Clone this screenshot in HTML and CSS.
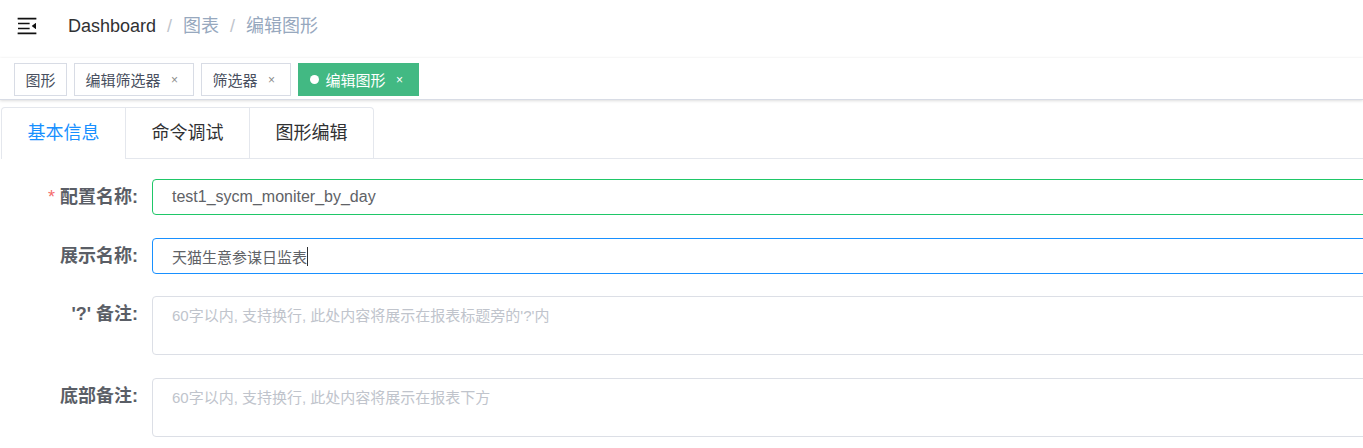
FILE: index.html
```html
<!DOCTYPE html>
<html lang="zh-CN">
<head>
<meta charset="utf-8">
<title>编辑图形</title>
<link rel="stylesheet" href="styles.css">
</head>
<body>
<div class="app">
  <header class="navbar">
    <div class="hamburger">
      <svg class="hamburger-icon" viewBox="0 0 1024 1024" width="24" height="24" aria-hidden="true">
        <path fill="#111" d="M408 442h480c4.4 0 8-3.6 8-8v-56c0-4.4-3.6-8-8-8H408c-4.4 0-8 3.6-8 8v56c0 4.4 3.6 8 8 8zm-8 204c0 4.4 3.6 8 8 8h480c4.4 0 8-3.6 8-8v-56c0-4.4-3.6-8-8-8H408c-4.4 0-8 3.6-8 8v56zm504-486H120c-4.4 0-8 3.6-8 8v56c0 4.4 3.6 8 8 8h784c4.4 0 8-3.6 8-8v-56c0-4.4-3.6-8-8-8zm0 632H120c-4.4 0-8 3.6-8 8v56c0 4.4 3.6 8 8 8h784c4.4 0 8-3.6 8-8v-56c0-4.4-3.6-8-8-8zM142.4 642.1L298.7 519a8.840 8.840 0 0 0 0-13.9L142.4 381.9c-5.8-4.6-14.4-.5-14.4 6.9v246.3a8.900 8.900 0 0 0 14.4 7z"/>
      </svg>
    </div>
    <nav class="breadcrumb">
      <span class="crumb crumb-link">Dashboard</span>
      <span class="crumb-sep">/</span>
      <span class="crumb">图表</span>
      <span class="crumb-sep">/</span>
      <span class="crumb">编辑图形</span>
    </nav>
  </header>

  <div class="tags-view">
    <span class="tag">图形</span>
    <span class="tag">编辑筛选器<span class="tag-close">×</span></span>
    <span class="tag">筛选器<span class="tag-close">×</span></span>
    <span class="tag tag-active"><span class="tag-dot"></span>编辑图形<span class="tag-close">×</span></span>
  </div>

  <main class="main">
    <div class="tabs">
      <div class="tabs-header">
        <div class="tab-list">
          <div class="tab tab-active">基本信息</div>
          <div class="tab">命令调试</div>
          <div class="tab">图形编辑</div>
        </div>
      </div>
      <form class="form">
        <div class="form-item">
          <label class="form-label"><span class="required">*</span>配置名称:</label>
          <div class="form-control">
            <div class="input input-success">test1_sycm_moniter_by_day</div>
          </div>
        </div>
        <div class="form-item">
          <label class="form-label">展示名称:</label>
          <div class="form-control">
            <div class="input input-focus">天猫生意参谋日监表<span class="caret"></span></div>
          </div>
        </div>
        <div class="form-item">
          <label class="form-label">'?' 备注:</label>
          <div class="form-control">
            <textarea class="textarea" placeholder="60字以内, 支持换行, 此处内容将展示在报表标题旁的'?'内"></textarea>
          </div>
        </div>
        <div class="form-item">
          <label class="form-label">底部备注:</label>
          <div class="form-control">
            <textarea class="textarea" placeholder="60字以内, 支持换行, 此处内容将展示在报表下方"></textarea>
          </div>
        </div>
      </form>
    </div>
  </main>
</div>
</body>
</html>
```

FILE: styles.css
```css
html, body {
  margin: 0;
  padding: 0;
  background: #fff;
  overflow: hidden;
}

body {
  font-family: "Liberation Sans", "Noto Sans CJK SC", sans-serif;
  color: #303133;
}

.app {
  width: 100%;
}

/* ---------- navbar ---------- */
.navbar {
  height: 58px;
  box-sizing: border-box;
  padding-bottom: 6px;
  display: flex;
  align-items: center;
  background: #fff;
}

.hamburger {
  padding: 0 15px;
  display: flex;
  align-items: center;
}

.hamburger-icon {
  display: block;
  transform: rotate(180deg);
}

.breadcrumb {
  margin-left: 14px;
  display: flex;
  align-items: center;
  font-size: 18px;
  line-height: 24px;
}

.crumb {
  color: #97a8be;
}

.crumb-link {
  color: #303133;
}

.crumb-sep {
  color: #c0c4cc;
  margin: 0 11px;
}

/* ---------- tags view ---------- */
.tags-view {
  height: 42px;
  box-sizing: border-box;
  padding: 5px 0 0 14px;
  display: flex;
  align-items: flex-start;
  gap: 7px;
  background: #fff;
  border-bottom: 1px solid #d8dce5;
  box-shadow: 0 1px 3px 0 rgba(0, 0, 0, 0.12), 0 0 3px 0 rgba(0, 0, 0, 0.04);
  position: relative;
}

.tag {
  height: 33px;
  box-sizing: border-box;
  display: inline-flex;
  align-items: center;
  padding: 0 10.5px;
  border: 1px solid #d8dce5;
  color: #495060;
  background: #fff;
  font-size: 15px;
}

.tag-close {
  display: inline-block;
  width: 16px;
  margin-left: 6px;
  text-align: center;
  font-size: 12px;
  color: #8c8c8c;
}

.tag-active {
  background: #42b983;
  border-color: #42b983;
  color: #fff;
}

.tag-active .tag-close {
  color: #fff;
}

.tag-dot {
  width: 9px;
  height: 9px;
  border-radius: 50%;
  background: #fff;
  margin-right: 7px;
}

/* ---------- main ---------- */
.main {
  padding: 7px 0 0 1px;
}

.tabs {
  overflow: hidden;
}

.tabs-header {
  border-bottom: 1px solid #e4e7ed;
  display: flex;
}

.tab-list {
  display: flex;
  border: 1px solid #e4e7ed;
  border-bottom: none;
  border-radius: 4px 4px 0 0;
  margin-bottom: -1px;
}

.tab {
  padding: 0 25.5px;
  height: 50px;
  line-height: 50px;
  font-size: 18px;
  color: #303133;
  border-left: 1px solid #e4e7ed;
  border-bottom: 1px solid #e4e7ed;
}

.tab:first-child {
  border-left: none;
}

.tab-active {
  color: #1890ff;
  border-bottom-color: #fff;
}

/* ---------- form ---------- */
.form {
  padding-top: 20px;
  margin-right: -40px;
}

.form-item {
  display: flex;
  align-items: flex-start;
  margin-bottom: 23px;
}

.form-item:nth-child(2) {
  margin-bottom: 22px;
}

.form-label {
  width: 151px;
  flex: none;
  box-sizing: border-box;
  padding-right: 14px;
  text-align: right;
  font-size: 18px;
  font-weight: bold;
  line-height: 36px;
  color: #5a5e66;
}

.required {
  color: #f56c6c;
  font-weight: normal;
  margin-right: 5px;
}

.form-control {
  flex: 1;
  min-width: 0;
}

.input {
  height: 36px;
  box-sizing: border-box;
  border: 1px solid #dcdfe6;
  border-radius: 4px;
  padding: 0 19px;
  display: flex;
  align-items: center;
  font-size: 16px;
  color: #606266;
  font-family: "Liberation Sans", "Noto Sans CJK SC", sans-serif;
}

.caret {
  display: inline-block;
  width: 1px;
  height: 19px;
  background: #303133;
}

.input-success {
  border-color: #1fc768;
}

.input-focus {
  border-color: #1890ff;
  font-size: 15px;
}

.textarea {
  display: block;
  width: 100%;
  height: 59px;
  box-sizing: border-box;
  border: 1px solid #dcdfe6;
  border-radius: 4px;
  padding: 9px 19px;
  font-family: "Liberation Sans", "Noto Sans CJK SC", sans-serif;
  font-size: 15px;
  line-height: 20px;
  color: #606266;
  resize: none;
  outline: none;
}

.textarea::placeholder {
  color: #c0c4cc;
}
```
